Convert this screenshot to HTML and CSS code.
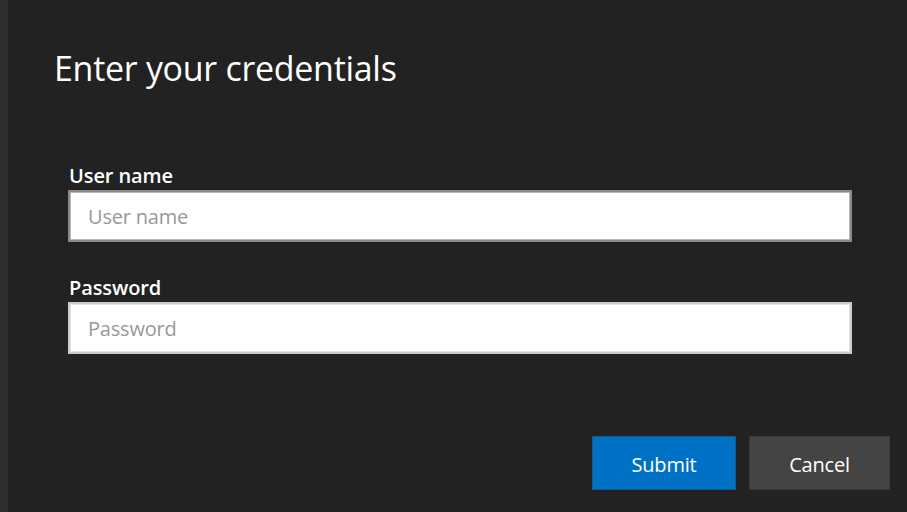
FILE: index.html
```html
<!DOCTYPE html>
<html lang="en">
<head>
<meta charset="utf-8">
<title>Enter your credentials</title>
<link rel="stylesheet" href="styles.css">
</head>
<body>
<div class="page">
  <div class="strip"></div>
  <div class="dialog">
    <h1 class="title">Enter your credentials</h1>
    <form class="form">
      <div class="field">
        <label class="label" for="user">User name</label>
        <input class="input input-focus" id="user" type="text" placeholder="User name">
      </div>
      <div class="field">
        <label class="label" for="pass">Password</label>
        <input class="input" id="pass" type="password" placeholder="Password">
      </div>
    </form>
    <div class="actions">
      <button class="btn btn-primary" type="button">Submit</button>
      <button class="btn btn-secondary" type="button">Cancel</button>
    </div>
  </div>
</div>
</body>
</html>
```

FILE: styles.css
```css
html, body {
  margin: 0;
  padding: 0;
  background: #222222;
}
body {
  font-family: "Open Sans", "Noto Sans", sans-serif;
  color: #ffffff;
}
.page {
  display: flex;
  width: 907px;
  height: 512px;
}
.strip {
  width: 8px;
  background: #2e2e2e;
}
.dialog {
  flex: 1;
  background: #222222;
  display: flex;
  flex-direction: column;
  padding: 46px 17px 22px 46px;
}
.title {
  margin: 0;
  font-size: 34px;
  font-weight: 400;
  line-height: 44px;
  letter-spacing: -0.3px;
}
.form {
  display: flex;
  flex-direction: column;
  gap: 32px;
  padding: 0 38px 0 14px;
  margin-top: 72px;
}
.field {
  display: flex;
  flex-direction: column;
}
.label {
  font-size: 20px;
  font-weight: 600;
  line-height: 28px;
  letter-spacing: -0.1px;
  margin-left: 1px;
}
.input {
  box-sizing: border-box;
  height: 52px;
  width: 100%;
  margin: 0;
  border: 2px solid #cccccc;
  box-shadow: inset 0 0 0 1px #e2e2e2;
  background: #ffffff;
  padding: 0 18px;
  font-family: "Open Sans", "Noto Sans", sans-serif;
  font-size: 20px;
  letter-spacing: -0.2px;
  color: #222;
  outline: none;
}
.input-focus {
  border-color: #8a8a8a;
  box-shadow: inset 0 0 0 1px #b8b8b8;
}
.input::placeholder {
  color: #999999;
}
.actions {
  margin-top: auto;
  display: flex;
  justify-content: flex-end;
  gap: 13px;
}
.btn {
  box-sizing: border-box;
  height: 54px;
  margin: 0;
  padding: 2px 0 0;
  font-family: "Open Sans", "Noto Sans", sans-serif;
  font-size: 20px;
  color: #ffffff;
  letter-spacing: -0.2px;
  cursor: pointer;
}
.btn-primary {
  width: 144px;
  background: #0072c6;
  border: 1px solid #15588a;
}
.btn-secondary {
  width: 141px;
  background: #444444;
  border: 1px solid #393939;
}
```
